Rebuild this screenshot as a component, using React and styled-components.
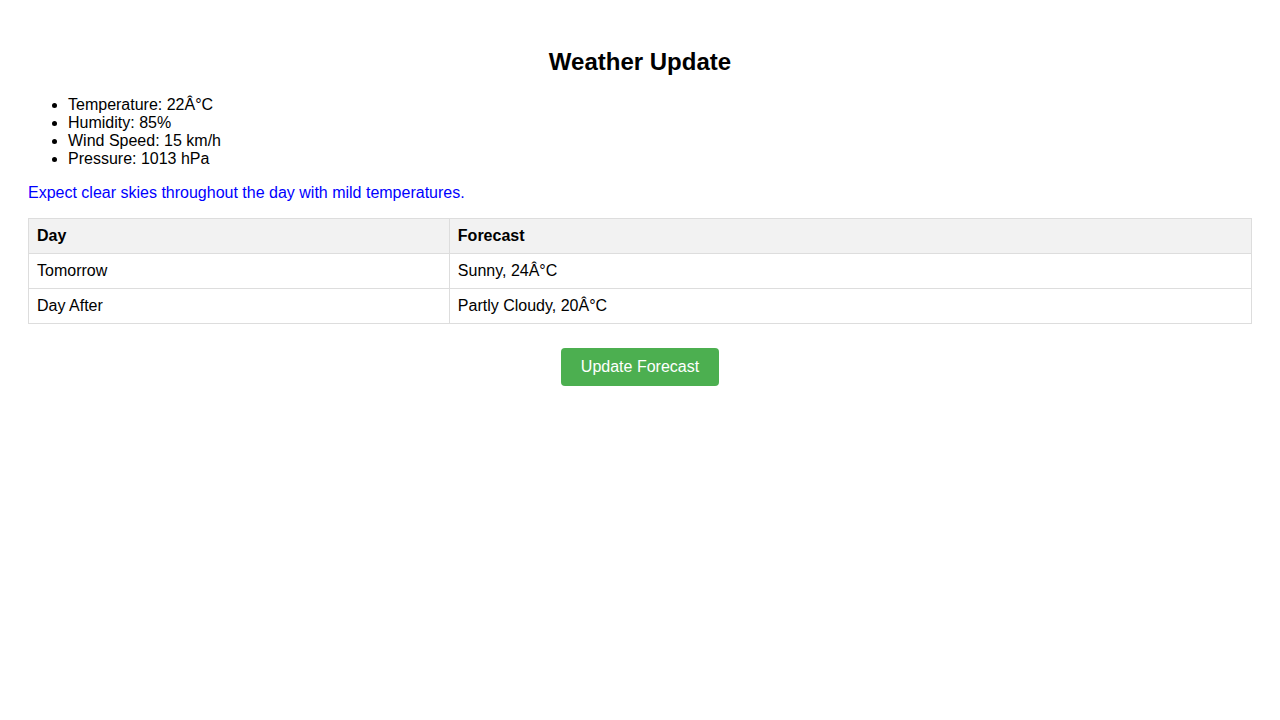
import React from 'react';
import styled, { createGlobalStyle } from 'styled-components';

const GlobalStyle = createGlobalStyle`
  body {
    margin: 8px;
    padding: 20px;
    font-family: 'Liberation Sans', Arial, sans-serif;
    color: #000;
    background: #fff;
  }
`;

const Title = styled.h2`
  text-align: center;
  font-size: 24px;
  margin: 20px 0;
`;

const StatList = styled.ul`
  margin: 16px 0;
  padding-left: 40px;
  font-size: 16px;
  line-height: 18px;
`;

const Note = styled.p`
  color: #0000ff;
  font-size: 16px;
  margin: 16px 0;
`;

const ForecastTable = styled.table`
  width: 100%;
  border-collapse: collapse;
  font-size: 16px;
  margin: 0 0 24px;
`;

const Cell = styled.td`
  border: 1px solid #ddd;
  padding: 8px;
  text-align: left;
`;

const HeadCell = styled(Cell).attrs({ as: 'th' })`
  background-color: #f2f2f2;
  font-weight: bold;
`;

const ButtonRow = styled.div`
  text-align: center;
`;

const UpdateButton = styled.button`
  background-color: #4caf50;
  color: #fff;
  border: none;
  border-radius: 4px;
  padding: 10px 20px;
  font-family: 'Liberation Sans', Arial, sans-serif;
  font-size: 16px;
  line-height: 18px;
  cursor: pointer;
`;

const stats = [
  'Temperature: 22\u00c2\u00b0C',
  'Humidity: 85%',
  'Wind Speed: 15 km/h',
  'Pressure: 1013 hPa'
];

const forecast = [
  { day: 'Tomorrow', text: 'Sunny, 24\u00c2\u00b0C' },
  { day: 'Day After', text: 'Partly Cloudy, 20\u00c2\u00b0C' }
];

export default function App() {
  return (
    <>
      <GlobalStyle />
      <Title>Weather Update</Title>
      <StatList>
        {stats.map(s => (
          <li key={s}>{s}</li>
        ))}
      </StatList>
      <Note>Expect clear skies throughout the day with mild temperatures.</Note>
      <ForecastTable>
        <thead>
          <tr>
            <HeadCell>Day</HeadCell>
            <HeadCell>Forecast</HeadCell>
          </tr>
        </thead>
        <tbody>
          {forecast.map(row => (
            <tr key={row.day}>
              <Cell>{row.day}</Cell>
              <Cell>{row.text}</Cell>
            </tr>
          ))}
        </tbody>
      </ForecastTable>
      <ButtonRow>
        <UpdateButton>Update Forecast</UpdateButton>
      </ButtonRow>
    </>
  );
}
